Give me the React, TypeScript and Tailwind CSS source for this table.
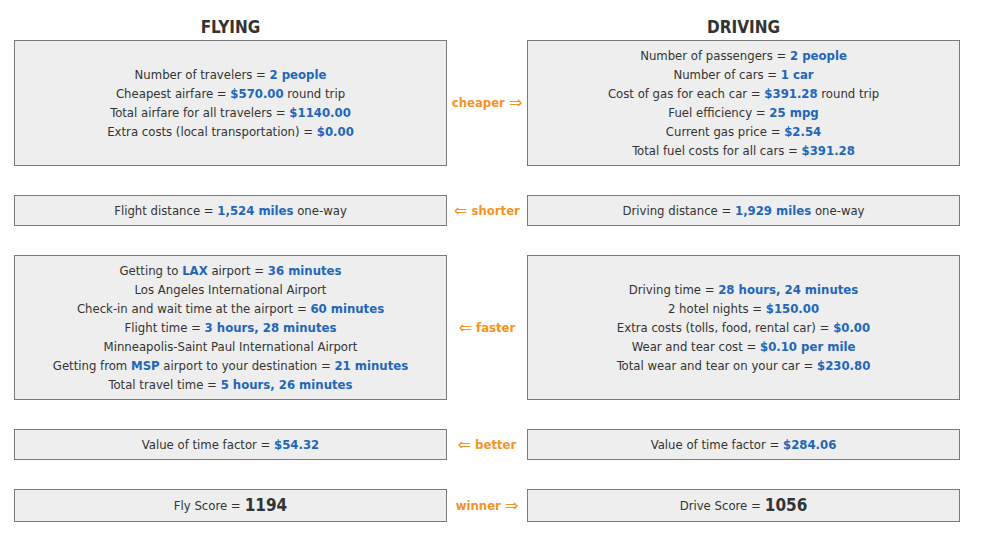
import React from "react";

type Part = string | { v: string };

const V = ({ children }: { children: React.ReactNode }) => (
  <span className="font-bold text-[#2266bb]">{children}</span>
);

const Box = ({ lines, className = "" }: { lines: Part[][]; className?: string }) => (
  <div
    className={
      "border border-[#7a7a7a] bg-[#eeeeee] flex flex-col justify-center items-center text-center text-[13px] leading-[19px] text-[#333333] " +
      className
    }
  >
    {lines.map((line, i) => (
      <div key={i}>
        {line.map((p, j) => (typeof p === "string" ? <span key={j}>{p}</span> : <V key={j}>{p.v}</V>))}
      </div>
    ))}
  </div>
);

const Arrow = ({ dir }: { dir: "l" | "r" }) => (
  <span className="text-[16px] leading-none font-normal" style={{ fontFamily: '"DejaVu Sans", sans-serif' }}>
    {dir === "l" ? "⇐" : "⇒"}
  </span>
);

const Mid = ({ children }: { children: React.ReactNode }) => (
  <div className="flex items-center justify-center gap-[4px] text-[13px] font-bold text-[#f7931e]">{children}</div>
);

const App = () => {
  return (
    <div
      className="w-[983px] h-[553px] bg-white pl-[14px]"
      style={{ fontFamily: '"DejaVu Sans Condensed", "DejaVu Sans", sans-serif' }}
    >
      <div className="grid grid-cols-[433px_80px_433px]">
        <div className="h-[40px] flex items-center justify-center text-[17px] font-bold text-[#333333] pt-[16px]">FLYING</div>
        <div />
        <div className="h-[40px] flex items-center justify-center text-[17px] font-bold text-[#333333] pt-[16px]">DRIVING</div>

        <Box
          className="h-[126px]"
          lines={[
            ["Number of travelers = ", { v: "2 people" }],
            ["Cheapest airfare = ", { v: "$570.00" }, " round trip"],
            ["Total airfare for all travelers = ", { v: "$1140.00" }],
            ["Extra costs (local transportation) = ", { v: "$0.00" }],
          ]}
        />
        <Mid>
          <span>cheaper</span>
          <Arrow dir="r" />
        </Mid>
        <Box
          className="h-[126px]"
          lines={[
            ["Number of passengers = ", { v: "2 people" }],
            ["Number of cars = ", { v: "1 car" }],
            ["Cost of gas for each car = ", { v: "$391.28" }, " round trip"],
            ["Fuel efficiency = ", { v: "25 mpg" }],
            ["Current gas price = ", { v: "$2.54" }],
            ["Total fuel costs for all cars = ", { v: "$391.28" }],
          ]}
        />

        <div className="col-span-3 h-[29px]" />

        <Box className="h-[31px]" lines={[["Flight distance = ", { v: "1,524 miles" }, " one-way"]]} />
        <Mid>
          <Arrow dir="l" />
          <span>shorter</span>
        </Mid>
        <Box className="h-[31px]" lines={[["Driving distance = ", { v: "1,929 miles" }, " one-way"]]} />

        <div className="col-span-3 h-[29px]" />

        <Box
          className="h-[145px]"
          lines={[
            ["Getting to ", { v: "LAX" }, " airport = ", { v: "36 minutes" }],
            ["Los Angeles International Airport"],
            ["Check-in and wait time at the airport = ", { v: "60 minutes" }],
            ["Flight time = ", { v: "3 hours, 28 minutes" }],
            ["Minneapolis-Saint Paul International Airport"],
            ["Getting from ", { v: "MSP" }, " airport to your destination = ", { v: "21 minutes" }],
            ["Total travel time = ", { v: "5 hours, 26 minutes" }],
          ]}
        />
        <Mid>
          <Arrow dir="l" />
          <span>faster</span>
        </Mid>
        <Box
          className="h-[145px]"
          lines={[
            ["Driving time = ", { v: "28 hours, 24 minutes" }],
            ["2 hotel nights = ", { v: "$150.00" }],
            ["Extra costs (tolls, food, rental car) = ", { v: "$0.00" }],
            ["Wear and tear cost = ", { v: "$0.10 per mile" }],
            ["Total wear and tear on your car = ", { v: "$230.80" }],
          ]}
        />

        <div className="col-span-3 h-[29px]" />

        <Box className="h-[31px]" lines={[["Value of time factor = ", { v: "$54.32" }]]} />
        <Mid>
          <Arrow dir="l" />
          <span>better</span>
        </Mid>
        <Box className="h-[31px]" lines={[["Value of time factor = ", { v: "$284.06" }]]} />

        <div className="col-span-3 h-[29px]" />

        <div className="h-[33px] border border-[#7a7a7a] bg-[#eeeeee] flex items-center justify-center text-[13px] text-[#333333] pt-[1px]">
          <span>Fly Score = </span>
          <span className="font-bold text-[17px] ml-[4px]">1194</span>
        </div>
        <Mid>
          <span>winner</span>
          <Arrow dir="r" />
        </Mid>
        <div className="h-[33px] border border-[#7a7a7a] bg-[#eeeeee] flex items-center justify-center text-[13px] text-[#333333] pt-[1px]">
          <span>Drive Score = </span>
          <span className="font-bold text-[17px] ml-[4px]">1056</span>
        </div>
      </div>
    </div>
  );
};

export default App;
